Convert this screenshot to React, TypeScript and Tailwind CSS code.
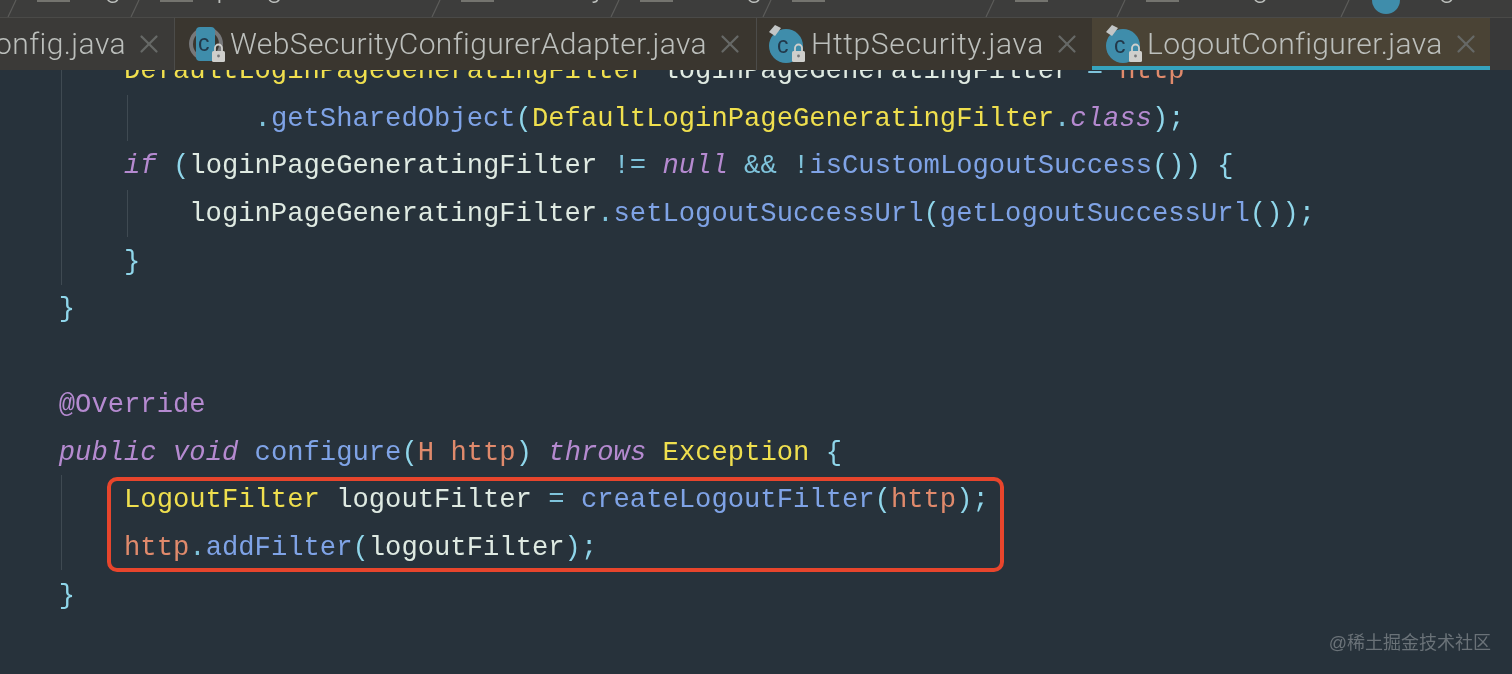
import { X } from 'lucide-react';

const colors = {
  white: 'text-[#dfeae2]',
  yellow: 'text-[#efdf4e]',
  blue: 'text-[#7fa3e6]',
  cyan: 'text-[#8fd6ea]',
  purple: 'text-[#b58ad0]',
  orange: 'text-[#e08a6c]',
  op: 'text-[#7fc4dc]',
};

type Tok = [string, keyof typeof colors, boolean?];

const lines: Tok[][] = [
  [['        ', 'white'], ['DefaultLoginPageGeneratingFilter', 'yellow'], [' loginPageGeneratingFilter ', 'white'], ['=', 'op'], [' http', 'orange']],
  [['                ', 'white'], ['.', 'op'], ['getSharedObject', 'blue'], ['(', 'cyan'], ['DefaultLoginPageGeneratingFilter', 'yellow'], ['.', 'op'], ['class', 'purple', true], [')', 'cyan'], [';', 'cyan']],
  [['        ', 'white'], ['if', 'purple', true], [' ', 'white'], ['(', 'cyan'], ['loginPageGeneratingFilter ', 'white'], ['!=', 'op'], [' ', 'white'], ['null', 'purple', true], [' ', 'white'], ['&&', 'op'], [' ', 'white'], ['!', 'op'], ['isCustomLogoutSuccess', 'blue'], ['())', 'cyan'], [' {', 'cyan']],
  [['            ', 'white'], ['loginPageGeneratingFilter', 'white'], ['.', 'op'], ['setLogoutSuccessUrl', 'blue'], ['(', 'cyan'], ['getLogoutSuccessUrl', 'blue'], ['());', 'cyan']],
  [['        ', 'white'], ['}', 'cyan']],
  [['    ', 'white'], ['}', 'cyan']],
  [],
  [['    ', 'white'], ['@Override', 'purple']],
  [['    ', 'white'], ['public', 'purple', true], [' ', 'white'], ['void', 'purple', true], [' ', 'white'], ['configure', 'blue'], ['(', 'cyan'], ['H', 'orange'], [' ', 'white'], ['http', 'orange'], [')', 'cyan'], [' ', 'white'], ['throws', 'purple', true], [' ', 'white'], ['Exception', 'yellow'], [' {', 'cyan']],
  [['        ', 'white'], ['LogoutFilter', 'yellow'], [' logoutFilter ', 'white'], ['=', 'op'], [' ', 'white'], ['createLogoutFilter', 'blue'], ['(', 'cyan'], ['http', 'orange'], [')', 'cyan'], [';', 'cyan']],
  [['        ', 'white'], ['http', 'orange'], ['.', 'op'], ['addFilter', 'blue'], ['(', 'cyan'], ['logoutFilter', 'white'], [')', 'cyan'], [';', 'cyan']],
  [['    ', 'white'], ['}', 'cyan']],
];

// the breadcrumb is cut off by the screenshot, only the descenders show
const crumbs = [
  { name: '', width: 'w-[12px]' },
  { name: 'org', width: 'w-[123px]' },
  { name: 'springframework', width: 'w-[301px]' },
  { name: 'security', width: 'w-[179px]' },
  { name: 'config', width: 'w-[152px]' },
  { name: 'annotation', width: 'w-[223px]' },
  { name: 'web', width: 'w-[131px]' },
  { name: 'configurers', width: 'w-[224px]' },
];

function ClassIcon({ pinned, hidden }: { pinned?: boolean; hidden?: boolean }) {
  return (
    <svg width="38" height="38" viewBox="0 0 38 38" className="shrink-0 overflow-visible">
      {hidden ? (
        <>
          <circle cx="18" cy="19" r="17" fill="#77787a" />
          <circle cx="18" cy="19" r="13" fill="#3a362f" />
          <rect x="8" y="2" width="19" height="34" rx="4" fill="#3f8dab" />
        </>
      ) : (
        <circle cx="18" cy="21" r="17" fill="#3f8dab" />
      )}
      <text x={hidden ? 10 : 9} y={hidden ? 26 : 28} fontSize="23" fontFamily="Liberation Sans" fill="#22384a">c</text>
      {pinned && <path d="M1 7 L7 0 L13 3 L7 11 Z" fill="#c3c6c6" />}
      <rect x="24" y="26" width="13" height="11" rx="1.5" fill="#cfcfcc" />
      <path d="M27 26 v-3 a3.5 3.5 0 0 1 7 0 v3" fill="none" stroke="#cfcfcc" strokeWidth="1.8" />
      <circle cx="30.5" cy="31" r="1.4" fill="#77787a" />
    </svg>
  );
}

function Tab({ name, active, pinned, hidden, noIcon, bg, className, textClass }: { name: string; active?: boolean; pinned?: boolean; hidden?: boolean; noIcon?: boolean; bg: string; className: string; textClass: string }) {
  return (
    <div className={`relative flex h-full shrink-0 items-center ${bg} ${className}`}>
      {!noIcon && <ClassIcon pinned={pinned} hidden={hidden} />}
      <span className={`font-['Roboto',sans-serif] text-[30px] font-light leading-none text-[#bcbfbc] ${textClass}`}>{name}</span>
      <X className="ml-[8px] h-[30px] w-[30px] shrink-0 text-[#666866]" strokeWidth={1.8} />
      {active && <div className="absolute inset-x-0 bottom-0 h-[4px] bg-[#36a3bd]" />}
    </div>
  );
}

export default function App() {
  return (
    <div className="relative h-[674px] w-[1512px] overflow-hidden bg-[#27323b] blur-[0.4px]">
      <div className="relative z-10 flex h-[17px] overflow-hidden bg-[#3d3d3c]">
        {crumbs.map((c, i) => (
          <div key={i} className={`relative flex h-full shrink-0 items-start ${c.width}`}>
            {c.name && (
              <>
                <div className="ml-[25px] h-[2px] w-[33px] shrink-0 bg-[#74746f]" />
                <span className="ml-[8px] -mt-[28px] font-['Roboto',sans-serif] text-[30px] font-light leading-[30px] text-[#bcbfbc]">{c.name}</span>
              </>
            )}
            <svg width="12" height="17" viewBox="0 0 12 17" className="absolute right-[-6px] top-0">
              <path d="M10 0 L2 17" stroke="#5c5c5a" strokeWidth="1.2" />
            </svg>
          </div>
        ))}
        <div className="relative flex h-full flex-1 items-start">
          <div className="-mt-[14px] ml-[27px] h-[28px] w-[28px] shrink-0 rounded-full bg-[#3f8dab]" />
          <span className="ml-[6px] -mt-[28px] font-['Roboto',sans-serif] text-[30px] font-light leading-[30px] text-[#bcbfbc]">LogoutConfigurer</span>
        </div>
      </div>
      <div className="relative z-10 flex h-[53px] overflow-hidden border-t border-[#4a4a48] bg-[#393939]">
        <Tab name="onfig.java" noIcon bg="bg-[#3b3a38]" className="w-[175px] border-r border-[#4c4c4a]" textClass="-ml-[5px] tracking-[0.42px]" />
        <Tab name="WebSecurityConfigurerAdapter.java" hidden bg="bg-[#3a362f]" className="w-[582px] border-r border-[#4c4c4a] pl-[13px]" textClass="ml-[4px] tracking-[0.38px]" />
        <Tab name="HttpSecurity.java" pinned bg="bg-[#3a362f]" className="w-[335px] pl-[11px]" textClass="ml-[5px] tracking-[0.66px]" />
        <Tab name="LogoutConfigurer.java" pinned active bg="bg-[#4a4335]" className="w-[398px] pl-[13px]" textClass="ml-[4px] tracking-[0.33px]" />
      </div>
      <div className="relative -mt-[23px] font-['Liberation_Mono',monospace] text-[27.2px] leading-[47.7px] whitespace-pre">
        <div className="-ml-[6.5px]">
          {lines.map((line, i) => (
            <div key={i} className="h-[47.7px]">
              {line.map(([text, color, italic], j) => (
                <span key={j} className={`${colors[color]} ${italic ? 'italic' : ''}`}>{text}</span>
              ))}
            </div>
          ))}
        </div>
        <div className="absolute left-[61px] top-[23px] h-[215px] w-px bg-[#3f4a52]" />
        <div className="absolute left-[127px] top-[48px] h-[46px] w-px bg-[#3f4a52]" />
        <div className="absolute left-[127px] top-[143px] h-[47px] w-px bg-[#3f4a52]" />
        <div className="absolute left-[61px] top-[428px] h-[95px] w-px bg-[#3f4a52]" />
        <div className="absolute left-[107px] top-[430px] h-[95px] w-[897px] rounded-[10px] border-[4px] border-[#e8452c]" />
      </div>
      <div className="absolute bottom-[22px] right-[21px] font-['Liberation_Sans','Noto_Sans_CJK_SC',sans-serif] text-[18px] leading-none text-[#6a7278]">@稀土掘金技术社区</div>
    </div>
  );
}
